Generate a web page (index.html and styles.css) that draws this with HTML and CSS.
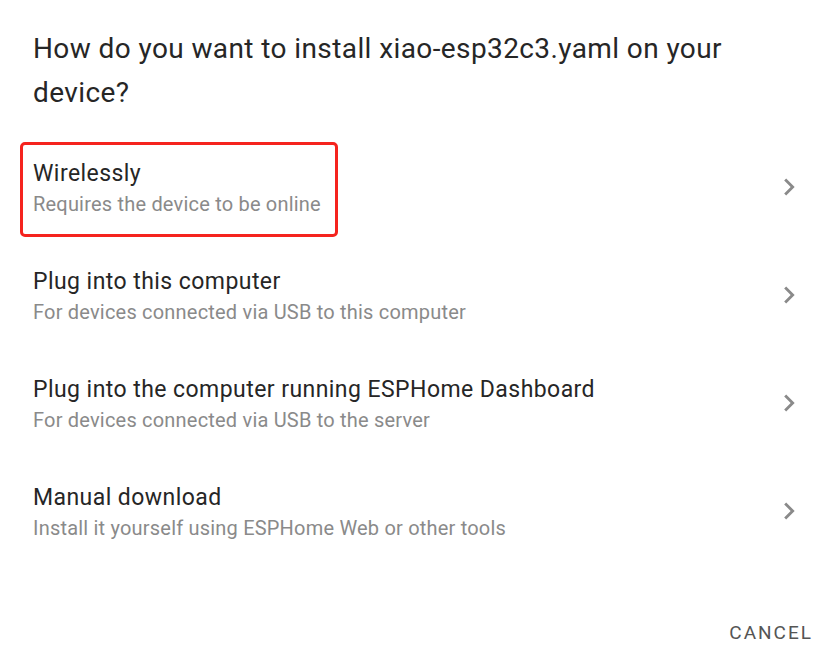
FILE: index.html
```html
<!DOCTYPE html>
<html>
<head>
<meta charset="utf-8">
<link rel="stylesheet" href="styles.css">
</head>
<body>
<div class="dialog">
  <h2 class="title">How do you want to install xiao-esp32c3.yaml on your device?</h2>
  <ul class="list">
    <li class="item">
      <div class="text">
        <div class="primary">Wirelessly</div>
        <div class="secondary">Requires the device to be online</div>
      </div>
      <svg class="chev" viewBox="0 0 24 24" width="34" height="34"><path d="M8.59 16.58L13.17 12 8.59 7.41 10 6l6 6-6 6z" fill="#8a8a8a"/></svg>
      <div class="highlight"></div>
    </li>
    <li class="item">
      <div class="text">
        <div class="primary">Plug into this computer</div>
        <div class="secondary">For devices connected via USB to this computer</div>
      </div>
      <svg class="chev" viewBox="0 0 24 24" width="34" height="34"><path d="M8.59 16.58L13.17 12 8.59 7.41 10 6l6 6-6 6z" fill="#8a8a8a"/></svg>
    </li>
    <li class="item">
      <div class="text">
        <div class="primary">Plug into the computer running ESPHome Dashboard</div>
        <div class="secondary">For devices connected via USB to the server</div>
      </div>
      <svg class="chev" viewBox="0 0 24 24" width="34" height="34"><path d="M8.59 16.58L13.17 12 8.59 7.41 10 6l6 6-6 6z" fill="#8a8a8a"/></svg>
    </li>
    <li class="item">
      <div class="text">
        <div class="primary">Manual download</div>
        <div class="secondary">Install it yourself using ESPHome Web or other tools</div>
      </div>
      <svg class="chev" viewBox="0 0 24 24" width="34" height="34"><path d="M8.59 16.58L13.17 12 8.59 7.41 10 6l6 6-6 6z" fill="#8a8a8a"/></svg>
    </li>
  </ul>
  <div class="actions">
    <button class="cancel">CANCEL</button>
  </div>
</div>
</body>
</html>
```

FILE: styles.css
```css
html, body {
  margin: 0;
  padding: 0;
  background: #ffffff;
}
body {
  font-family: Roboto, "Liberation Sans", sans-serif;
  width: 837px;
  height: 671px;
  overflow: hidden;
}
.dialog {
  display: flex;
  flex-direction: column;
  height: 671px;
}
.title {
  margin: 0;
  padding: 27px 90px 0 33px;
  font-size: 28px;
  font-weight: 400;
  line-height: 44px;
  color: #262626;
  letter-spacing: 0.4px;
}
.list {
  list-style: none;
  margin: 0;
  padding: 19px 0 0 0;
}
.item {
  position: relative;
  display: flex;
  align-items: center;
  height: 108px;
  padding: 0 31px 0 33px;
}
.text {
  flex: 1;
  display: flex;
  flex-direction: column;
  gap: 3px;
}
.primary {
  font-size: 23px;
  color: #262626;
  line-height: 28px;
  letter-spacing: 0.44px;
}
.secondary {
  font-size: 20px;
  color: #8a8a8a;
  line-height: 26px;
  letter-spacing: 0.2px;
}
.chev {
  flex: none;
  margin-bottom: 2px;
}
.highlight {
  position: absolute;
  box-sizing: border-box;
  left: 20px;
  top: 8px;
  width: 318px;
  height: 95px;
  border: 3px solid #f5231e;
  border-radius: 5px;
}
.actions {
  margin-top: auto;
  display: flex;
  justify-content: flex-end;
  padding: 0 24px 27px 0;
}
.cancel {
  background: none;
  border: none;
  font-family: Roboto, "Liberation Sans", sans-serif;
  font-size: 19px;
  letter-spacing: 2px;
  color: #555555;
  padding: 0;
}
```
